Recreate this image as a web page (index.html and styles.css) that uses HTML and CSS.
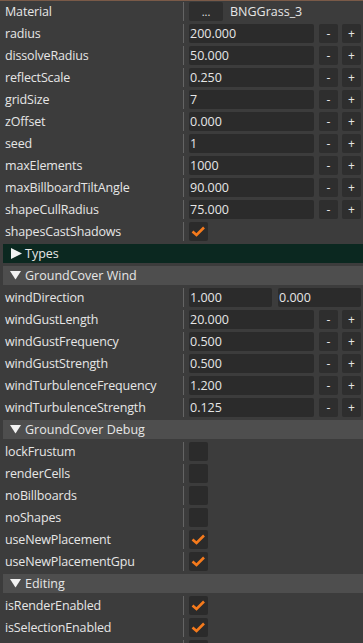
FILE: index.html
```html
<!DOCTYPE html>
<html lang="en">
<head>
    <meta charset="UTF-8">
    <meta name="viewport" content="width=device-width, initial-scale=1.0">
    <title>GroundCover Inspector</title>
    <link rel="stylesheet" href="styles.css">
</head>
<body>
    <div class="panel">
        <!-- Main properties -->
        <div class="row">
            <div class="label">Material</div>
            <div class="value">
                <button class="btn browse">...</button>
                <span class="asset">BNGGrass_3</span>
            </div>
        </div>
        <div class="row">
            <div class="label">radius</div>
            <div class="value"><div class="field">200.000</div><button class="btn step">-</button><button class="btn step">+</button></div>
        </div>
        <div class="row">
            <div class="label">dissolveRadius</div>
            <div class="value"><div class="field">50.000</div><button class="btn step">-</button><button class="btn step">+</button></div>
        </div>
        <div class="row">
            <div class="label">reflectScale</div>
            <div class="value"><div class="field">0.250</div><button class="btn step">-</button><button class="btn step">+</button></div>
        </div>
        <div class="row">
            <div class="label">gridSize</div>
            <div class="value"><div class="field">7</div><button class="btn step">-</button><button class="btn step">+</button></div>
        </div>
        <div class="row">
            <div class="label">zOffset</div>
            <div class="value"><div class="field">0.000</div><button class="btn step">-</button><button class="btn step">+</button></div>
        </div>
        <div class="row">
            <div class="label">seed</div>
            <div class="value"><div class="field">1</div><button class="btn step">-</button><button class="btn step">+</button></div>
        </div>
        <div class="row">
            <div class="label">maxElements</div>
            <div class="value"><div class="field">1000</div><button class="btn step">-</button><button class="btn step">+</button></div>
        </div>
        <div class="row">
            <div class="label">maxBillboardTiltAngle</div>
            <div class="value"><div class="field">90.000</div><button class="btn step">-</button><button class="btn step">+</button></div>
        </div>
        <div class="row">
            <div class="label">shapeCullRadius</div>
            <div class="value"><div class="field">75.000</div><button class="btn step">-</button><button class="btn step">+</button></div>
        </div>
        <div class="row">
            <div class="label">shapesCastShadows</div>
            <div class="value"><span class="check on"><svg viewBox="0 0 19 18"><polyline points="3.5,9.5 7.5,13 15,5.5"/></svg></span></div>
        </div>

        <div class="header hovered">
            <svg class="arrow" viewBox="0 0 22 19"><polygon points="8,4 19,9.5 8,15"/></svg>Types
        </div>

        <!-- Wind -->
        <div class="header">
            <svg class="arrow" viewBox="0 0 22 19"><polygon points="7,5 18,5 12.5,13.5"/></svg>GroundCover Wind
        </div>
        <div class="row">
            <div class="label">windDirection</div>
            <div class="value pair"><div class="field">1.000</div><div class="field">0.000</div></div>
        </div>
        <div class="row">
            <div class="label">windGustLength</div>
            <div class="value"><div class="field">20.000</div><button class="btn step">-</button><button class="btn step">+</button></div>
        </div>
        <div class="row">
            <div class="label">windGustFrequency</div>
            <div class="value"><div class="field">0.500</div><button class="btn step">-</button><button class="btn step">+</button></div>
        </div>
        <div class="row">
            <div class="label">windGustStrength</div>
            <div class="value"><div class="field">0.500</div><button class="btn step">-</button><button class="btn step">+</button></div>
        </div>
        <div class="row">
            <div class="label">windTurbulenceFrequency</div>
            <div class="value"><div class="field">1.200</div><button class="btn step">-</button><button class="btn step">+</button></div>
        </div>
        <div class="row">
            <div class="label">windTurbulenceStrength</div>
            <div class="value"><div class="field">0.125</div><button class="btn step">-</button><button class="btn step">+</button></div>
        </div>

        <!-- Debug -->
        <div class="header">
            <svg class="arrow" viewBox="0 0 22 19"><polygon points="7,5 18,5 12.5,13.5"/></svg>GroundCover Debug
        </div>
        <div class="row">
            <div class="label">lockFrustum</div>
            <div class="value"><span class="check"></span></div>
        </div>
        <div class="row">
            <div class="label">renderCells</div>
            <div class="value"><span class="check"></span></div>
        </div>
        <div class="row">
            <div class="label">noBillboards</div>
            <div class="value"><span class="check"></span></div>
        </div>
        <div class="row">
            <div class="label">noShapes</div>
            <div class="value"><span class="check"></span></div>
        </div>
        <div class="row">
            <div class="label">useNewPlacement</div>
            <div class="value"><span class="check on"><svg viewBox="0 0 19 18"><polyline points="3.5,9.5 7.5,13 15,5.5"/></svg></span></div>
        </div>
        <div class="row">
            <div class="label">useNewPlacementGpu</div>
            <div class="value"><span class="check on"><svg viewBox="0 0 19 18"><polyline points="3.5,9.5 7.5,13 15,5.5"/></svg></span></div>
        </div>

        <!-- Editing -->
        <div class="header">
            <svg class="arrow" viewBox="0 0 22 19"><polygon points="7,5 18,5 12.5,13.5"/></svg>Editing
        </div>
        <div class="row">
            <div class="label">isRenderEnabled</div>
            <div class="value"><span class="check on"><svg viewBox="0 0 19 18"><polyline points="3.5,9.5 7.5,13 15,5.5"/></svg></span></div>
        </div>
        <div class="row">
            <div class="label">isSelectionEnabled</div>
            <div class="value"><span class="check on"><svg viewBox="0 0 19 18"><polyline points="3.5,9.5 7.5,13 15,5.5"/></svg></span></div>
        </div>
        <div class="row">
            <div class="label"></div>
            <div class="value"><span class="check"></span></div>
        </div>
    </div>
</body>
</html>
```

FILE: styles.css
```css
* { margin: 0; padding: 0; box-sizing: border-box; }

body {
    font-family: 'Open Sans', 'Noto Sans', sans-serif;
    font-size: 12.5px;
    background: #3c3c3c;
    color: #e6e6e6;
    height: 643px;
    overflow: hidden;
}

.panel {
    border-top: 1px solid #7a5a48;
    padding-top: 1px;
    display: flex;
    flex-direction: column;
    gap: 3px;
}

.row {
    display: grid;
    grid-template-columns: 183px 1fr;
    height: 19px;
}

.label {
    padding-left: 5px;
    line-height: 19px;
    white-space: nowrap;
    letter-spacing: -0.15px;
}

.value {
    border-left: 1px solid #646464;
    padding: 0 2px 0 5px;
    display: flex;
    align-items: stretch;
}

.field {
    flex: 1;
    background: #2b2b2b;
    border-radius: 2px;
    padding-left: 1px;
    line-height: 19px;
}

.value.pair {
    gap: 6px;
}

.btn {
    font-family: inherit;
    font-size: 12px;
    color: #e6e6e6;
    background: #2e2e2e;
    border: none;
    border-radius: 2px;
    width: 19px;
    line-height: 19px;
    cursor: pointer;
}

.btn.step {
    margin-left: 4px;
}

.btn.step:first-of-type {
    margin-left: 5px;
}

.btn.browse {
    width: 34px;
    font-size: 11px;
}

.asset {
    margin-left: 7px;
    line-height: 19px;
}

.check {
    width: 19px;
    height: 19px;
    background: #2b2b2b;
    border-radius: 2px;
    display: block;
}

.check svg {
    width: 19px;
    height: 18px;
    display: block;
}

.check polyline {
    fill: none;
    stroke: #f57a1c;
    stroke-width: 2.6;
}

/* Collapsing section headers */
.header {
    margin-left: 3px;
    height: 19px;
    line-height: 19px;
    background: #4e4e4e;
    display: flex;
    align-items: center;
    white-space: nowrap;
}

.header.hovered {
    background: #0b2820;
}

.arrow {
    width: 22px;
    height: 19px;
    flex: none;
    fill: #f2f2f2;
}
```
